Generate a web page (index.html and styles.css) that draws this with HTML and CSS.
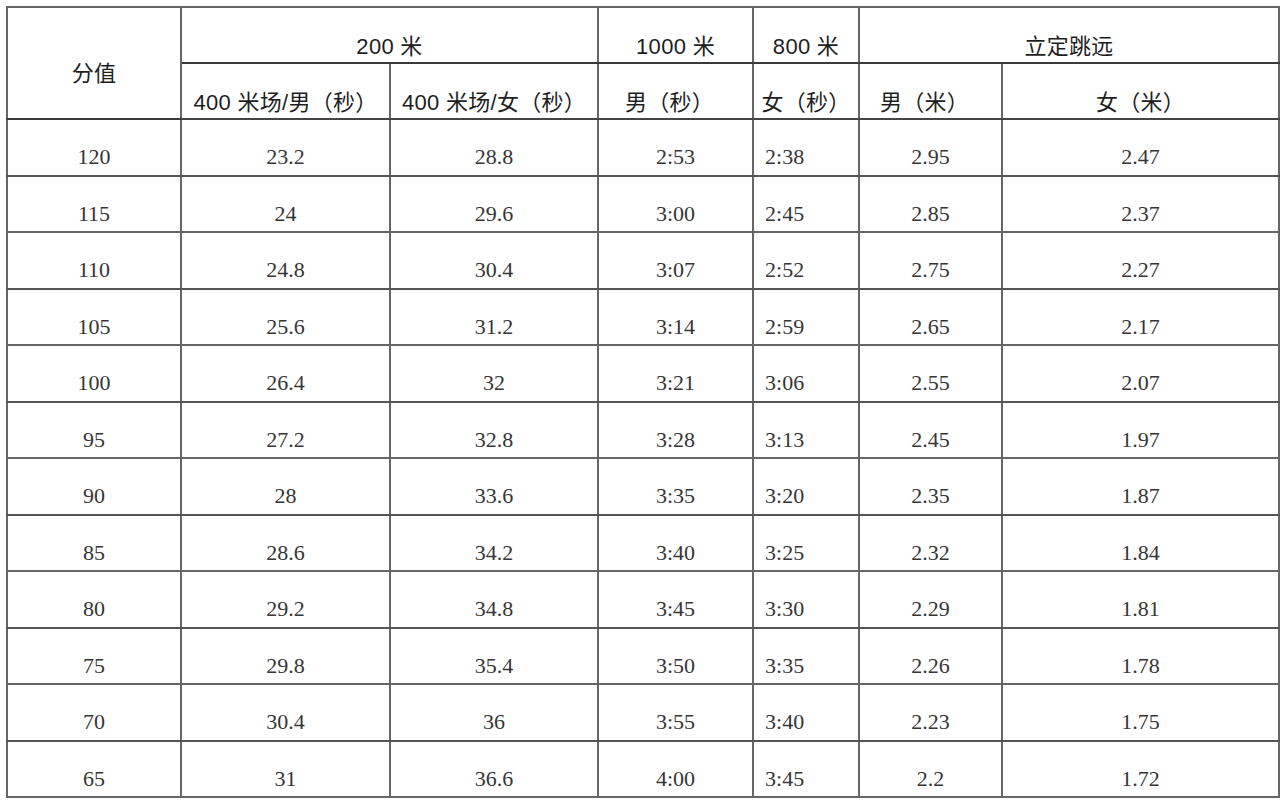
FILE: index.html
```html
<!DOCTYPE html>
<html lang="zh-CN">
<head>
<meta charset="utf-8">
<title>分值表</title>
<link rel="stylesheet" href="styles.css">
</head>
<body>
<table class="score">
  <colgroup>
    <col class="c1"><col class="c2"><col class="c3"><col class="c4"><col class="c5"><col class="c6"><col class="c7">
  </colgroup>
  <thead>
    <tr class="h1">
      <th rowspan="2" class="hd-score">分值</th>
      <th colspan="2">200 米</th>
      <th>1000 米</th>
      <th>800 米</th>
      <th colspan="2">立定跳远</th>
    </tr>
    <tr class="h2">
      <th>400 米场/男（秒）</th>
      <th>400 米场/女（秒）</th>
      <th class="shift">男（秒）</th>
      <th>女（秒）</th>
      <th class="shift">男（米）</th>
      <th>女（米）</th>
    </tr>
  </thead>
  <tbody>
    <tr><td>120</td><td>23.2</td><td>28.8</td><td>2:53</td><td class="left">2:38</td><td>2.95</td><td>2.47</td></tr>
    <tr><td>115</td><td>24</td><td>29.6</td><td>3:00</td><td class="left">2:45</td><td>2.85</td><td>2.37</td></tr>
    <tr><td>110</td><td>24.8</td><td>30.4</td><td>3:07</td><td class="left">2:52</td><td>2.75</td><td>2.27</td></tr>
    <tr><td>105</td><td>25.6</td><td>31.2</td><td>3:14</td><td class="left">2:59</td><td>2.65</td><td>2.17</td></tr>
    <tr><td>100</td><td>26.4</td><td>32</td><td>3:21</td><td class="left">3:06</td><td>2.55</td><td>2.07</td></tr>
    <tr><td>95</td><td>27.2</td><td>32.8</td><td>3:28</td><td class="left">3:13</td><td>2.45</td><td>1.97</td></tr>
    <tr><td>90</td><td>28</td><td>33.6</td><td>3:35</td><td class="left">3:20</td><td>2.35</td><td>1.87</td></tr>
    <tr><td>85</td><td>28.6</td><td>34.2</td><td>3:40</td><td class="left">3:25</td><td>2.32</td><td>1.84</td></tr>
    <tr><td>80</td><td>29.2</td><td>34.8</td><td>3:45</td><td class="left">3:30</td><td>2.29</td><td>1.81</td></tr>
    <tr><td>75</td><td>29.8</td><td>35.4</td><td>3:50</td><td class="left">3:35</td><td>2.26</td><td>1.78</td></tr>
    <tr><td>70</td><td>30.4</td><td>36</td><td>3:55</td><td class="left">3:40</td><td>2.23</td><td>1.75</td></tr>
    <tr><td>65</td><td>31</td><td>36.6</td><td>4:00</td><td class="left">3:45</td><td>2.2</td><td>1.72</td></tr>
  </tbody>
</table>
</body>
</html>
```
FILE: styles.css
```css
html, body {
  margin: 0;
  padding: 0;
  background: #ffffff;
}

body {
  padding: 6px 0 0 6px;
}

.score {
  border-collapse: collapse;
  table-layout: fixed;
  width: 1272px;
  border: 2px solid #6e6e6e;
}

.c1 { width: 174px; }
.c2 { width: 209px; }
.c3 { width: 208px; }
.c4 { width: 155px; }
.c5 { width: 106px; }
.c6 { width: 143px; }
.c7 { width: 277px; }

.score th,
.score td {
  border: 2px solid #666666;
  text-align: center;
  vertical-align: middle;
  padding: 18px 0 0 0;
  white-space: nowrap;
  overflow: hidden;
}

.score th {
  font-family: "Liberation Sans", "Noto Sans CJK SC", sans-serif;
  font-weight: normal;
  font-size: 22px;
  letter-spacing: 0.3px;
  color: #1e1e1e;
  height: 56px;
  box-sizing: border-box;
}

.score th.shift {
  padding-right: 12px;
}

.score .h1 th {
  border-bottom: 2px solid #3a3a3a;
}

.score .h2 th {
  border-bottom: 2px solid #444444;
}

.score .hd-score {
  font-size: 22px;
  padding-top: 16px;
}

.score td {
  font-family: "Liberation Serif", "Times New Roman", serif;
  font-size: 22px;
  color: #363636;
  height: 56.5px;
  box-sizing: border-box;
  padding-top: 20px;
}

.score tbody tr:nth-child(odd) td {
  border-bottom-color: #555555;
}

.score td.left {
  text-align: left;
  padding-left: 11px;
}

.score td:nth-child(6) {
  border-left-color: #333333;
}
```
